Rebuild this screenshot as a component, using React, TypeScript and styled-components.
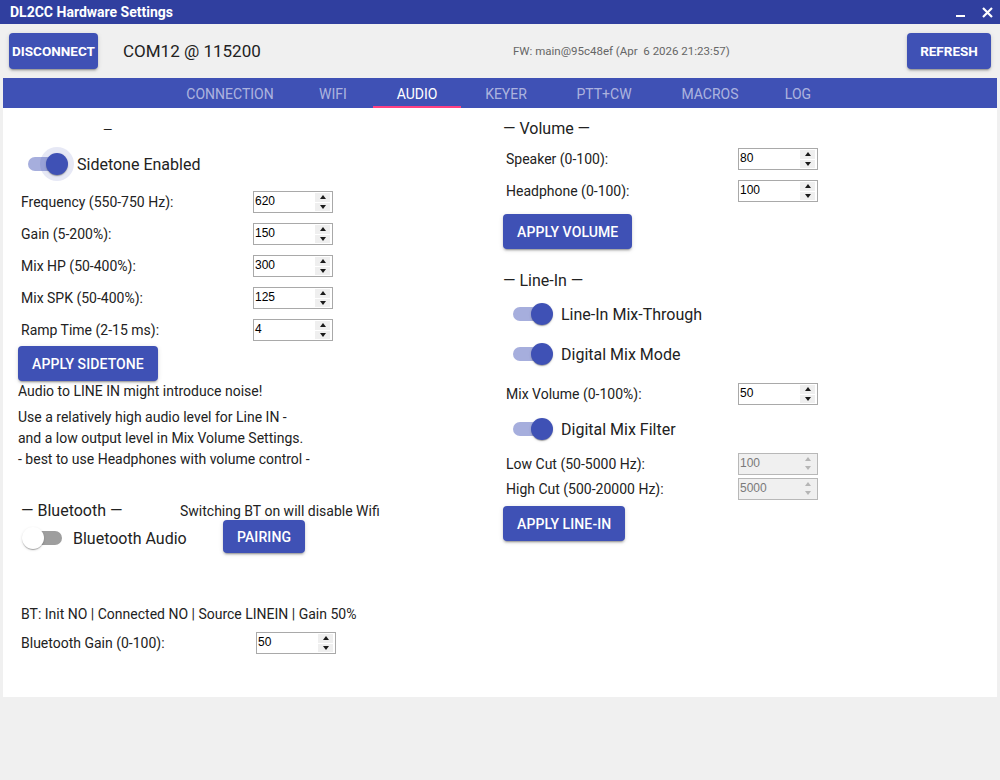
import styled, { createGlobalStyle } from "styled-components";

const GlobalStyle = createGlobalStyle`
  html, body {
    margin: 0;
    padding: 0;
    background: #f0f0f0;
  }
  body {
    font-family: Roboto, "Liberation Sans", sans-serif;
    color: rgba(0, 0, 0, 0.87);
  }
`;

const TABS = [
  { label: "Connection", width: 126 },
  { label: "WiFi", width: 80 },
  { label: "Audio", width: 88 },
  { label: "Keyer", width: 90 },
  { label: "PTT+CW", width: 106 },
  { label: "Macros", width: 106 },
  { label: "Log", width: 70 },
];

const SIDETONE = [
  { label: "Frequency (550-750 Hz):", value: "620" },
  { label: "Gain (5-200%):", value: "150" },
  { label: "Mix HP (50-400%):", value: "300" },
  { label: "Mix SPK (50-400%):", value: "125" },
  { label: "Ramp Time (2-15 ms):", value: "4" },
];

interface NumberProps {
  value: string;
  disabled?: boolean;
}

const NumberBox = ({ value, disabled }: NumberProps) => (
  <NumBox $disabled={disabled}>
    <NumValue $disabled={disabled}>{value}</NumValue>
    <Spin>
      <SpinBtn>
        <Arrow $up $disabled={disabled} />
      </SpinBtn>
      <SpinBtn>
        <Arrow $disabled={disabled} />
      </SpinBtn>
    </Spin>
  </NumBox>
);

interface ToggleProps {
  on: boolean;
  focus?: boolean;
  label: string;
  indent?: number;
  gap?: number;
  height?: number;
}

const Toggle = ({ on, focus, label, indent = 4, gap = 8, height = 40 }: ToggleProps) => (
  <SwitchRow $indent={indent} $height={height}>
    <SwitchBase>
      <Track $on={on} />
      <Thumb $on={on} $focus={focus} />
    </SwitchBase>
    <SwitchLabel $gap={gap}>{label}</SwitchLabel>
  </SwitchRow>
);

export default function App() {
  return (
    <Frame>
      <GlobalStyle />
      <TitleBar>
        <Title>DL2CC Hardware Settings</Title>
        <WinControls>
          <svg width="10" height="10" viewBox="0 0 10 10">
            <rect x="0" y="7" width="9" height="2" fill="#fff" />
          </svg>
          <svg width="11" height="11" viewBox="0 0 11 11">
            <path d="M1 1 L10 10 M10 1 L1 10" stroke="#fff" strokeWidth="2.2" />
          </svg>
        </WinControls>
      </TitleBar>

      <Header>
        <HeaderButton $width={89}>Disconnect</HeaderButton>
        <Port>COM12 @ 115200</Port>
        <Firmware>FW: main@95c48ef (Apr  6 2026 21:23:57)</Firmware>
        <HeaderButton $width={84} $push>
          Refresh
        </HeaderButton>
      </Header>

      <Body>
        <TabBar>
          {TABS.map((t) => (
            <Tab key={t.label} $width={t.width} $active={t.label === "Audio"}>
              {t.label}
            </Tab>
          ))}
        </TabBar>

        <Content>
          <Column $top={12}>
            <Dash>—</Dash>
            <Spacer $h={6} />
            <Toggle on focus label="Sidetone Enabled" gap={9} height={36} />
            <Spacer $h={4} />
            {SIDETONE.map((f) => (
              <Field key={f.label}>
                <Label $width={232}>{f.label}</Label>
                <NumberBox value={f.value} />
              </Field>
            ))}
            <Button>Apply Sidetone</Button>
            <Note>Audio to LINE IN might introduce noise!</Note>
            <NoteBlock>
              Use a relatively high audio level for Line IN -
              <br />
              and a low output level in Mix Volume Settings.
              <br />- best to use Headphones with volume control -
            </NoteBlock>

            <BtRow>
              <BtLeft>
                <Heading>— Bluetooth —</Heading>
                <Toggle on={false} label="Bluetooth Audio" indent={1} gap={5} height={34} />
              </BtLeft>
              <BtRight>
                <Note>Switching BT on will disable Wifi</Note>
                <PairButton>Pairing</PairButton>
              </BtRight>
            </BtRow>

            <Status>BT: Init NO | Connected NO | Source LINEIN | Gain 50%</Status>
            <Spacer $h={3} />
            <Field>
              <Label $width={235}>Bluetooth Gain (0-100):</Label>
              <NumberBox value="50" />
            </Field>
          </Column>

          <Column $top={11}>
            <Heading>— Volume —</Heading>
            <Spacer $h={4} />
            <Field>
              <Label $width={232}>Speaker (0-100):</Label>
              <NumberBox value="80" />
            </Field>
            <Field>
              <Label $width={232}>Headphone (0-100):</Label>
              <NumberBox value="100" />
            </Field>
            <Spacer $h={7} />
            <Button>Apply Volume</Button>
            <Spacer $h={22} />
            <Heading>— Line-In —</Heading>
            <Spacer $h={3} />
            <Toggle on label="Line-In Mix-Through" />
            <Toggle on label="Digital Mix Mode" />
            <Spacer $h={4} />
            <Field>
              <Label $width={232}>Mix Volume (0-100%):</Label>
              <NumberBox value="50" />
            </Field>
            <Toggle on label="Digital Mix Filter" height={38} />
            <Spacer $h={3} />
            <Field $height={25}>
              <Label $width={232}>Low Cut (50-5000 Hz):</Label>
              <NumberBox value="100" disabled />
            </Field>
            <Field $height={25}>
              <Label $width={232}>High Cut (500-20000 Hz):</Label>
              <NumberBox value="5000" disabled />
            </Field>
            <Spacer $h={5} />
            <Button>Apply Line-In</Button>
          </Column>
        </Content>
      </Body>
    </Frame>
  );
}

const Frame = styled.div`
  width: 1000px;
  height: 780px;
  background: #f0f0f0;
  overflow: hidden;
`;

const TitleBar = styled.div`
  height: 24px;
  background: #303f9f;
  display: flex;
  align-items: center;
  padding: 0 7px 0 10px;
`;

const Title = styled.span`
  color: #fff;
  font-weight: 700;
  font-size: 14px;
`;

const WinControls = styled.div`
  margin-left: auto;
  display: flex;
  align-items: center;
  gap: 16px;
  padding-top: 1px;
`;

const Header = styled.div`
  height: 54px;
  display: flex;
  align-items: center;
  padding: 0 9px;
`;

const Button = styled.button`
  height: 35px;
  padding: 0 14px;
  border: none;
  border-radius: 4px;
  background: #3f51b5;
  color: #fff;
  font-family: Roboto, "Liberation Sans", sans-serif;
  font-size: 14px;
  font-weight: 500;
  letter-spacing: 0.1px;
  text-transform: uppercase;
  white-space: nowrap;
  align-self: flex-start;
  box-shadow: 0 3px 1px -2px rgba(0, 0, 0, 0.2), 0 2px 2px 0 rgba(0, 0, 0, 0.14),
    0 1px 5px 0 rgba(0, 0, 0, 0.12);
`;

const HeaderButton = styled(Button)<{ $width: number; $push?: boolean }>`
  width: ${(p) => p.$width}px;
  height: 36px;
  padding: 0;
  align-self: center;
  font-size: 13.5px;
  font-weight: 700;
  letter-spacing: 0;
  margin-left: ${(p) => (p.$push ? "auto" : "0")};
`;

const PairButton = styled(Button)`
  height: 33px;
  margin: -1px 0 0 43px;
`;

const Port = styled.span`
  width: 390px;
  margin-left: 25px;
  font-size: 17px;
  color: #222;
`;

const Firmware = styled.span`
  font-size: 11.5px;
  color: #666;
  white-space: pre;
`;

const Body = styled.div`
  padding: 0 3px;
`;

const TabBar = styled.div`
  height: 30px;
  background: #3f51b5;
  display: flex;
  justify-content: center;
`;

const Tab = styled.div<{ $width: number; $active?: boolean }>`
  width: ${(p) => p.$width}px;
  box-sizing: border-box;
  display: flex;
  align-items: center;
  justify-content: center;
  padding-top: 3px;
  font-size: 14px;
  text-transform: uppercase;
  color: ${(p) => (p.$active ? "#fff" : "rgba(255, 255, 255, 0.58)")};
  border-bottom: 2px solid ${(p) => (p.$active ? "#ff4081" : "transparent")};
`;

const Content = styled.div`
  height: 589px;
  background: #fff;
  display: grid;
  grid-template-columns: 485px 1fr;
  padding-left: 15px;
  box-sizing: border-box;
`;

const Column = styled.div<{ $top: number }>`
  display: flex;
  flex-direction: column;
  padding-top: ${(p) => p.$top}px;
`;

const Spacer = styled.div<{ $h: number }>`
  height: ${(p) => p.$h}px;
  flex: none;
`;

const Dash = styled.div`
  padding-left: 85px;
  font-size: 12px;
  line-height: 20px;
  color: #222;
`;

const Heading = styled.div`
  font-size: 16px;
  line-height: 20px;
  color: #222;
`;

const SwitchRow = styled.div<{ $indent: number; $height: number }>`
  display: flex;
  align-items: center;
  height: ${(p) => p.$height}px;
  padding-left: ${(p) => p.$indent}px;
  white-space: nowrap;
`;

const SwitchBase = styled.span`
  position: relative;
  display: inline-block;
  width: 46px;
  height: 22px;
  flex: none;
`;

const Track = styled.span<{ $on: boolean }>`
  position: absolute;
  left: 6px;
  top: 4px;
  width: 34px;
  height: 14px;
  border-radius: 7px;
  background: ${(p) => (p.$on ? "#a6aedd" : "#9e9e9e")};
`;

const Thumb = styled.span<{ $on: boolean; $focus?: boolean }>`
  position: absolute;
  top: 0;
  left: ${(p) => (p.$on ? 24 : 0)}px;
  width: 22px;
  height: 22px;
  border-radius: 50%;
  background: ${(p) => (p.$on ? "#3f51b5" : "#fff")};
  box-shadow: 0 2px 1px -1px rgba(0, 0, 0, 0.2), 0 1px 1px 0 rgba(0, 0, 0, 0.14),
    0 1px 3px 0 rgba(0, 0, 0, 0.12)
    ${(p) => (p.$focus ? ", 0 0 0 6px rgba(63, 81, 181, 0.13)" : "")};
`;

const SwitchLabel = styled.span<{ $gap: number }>`
  margin-left: ${(p) => p.$gap}px;
  font-size: 16px;
  color: #222;
`;

const Field = styled.div<{ $height?: number }>`
  display: flex;
  align-items: center;
  height: ${(p) => p.$height ?? 32}px;
  padding-left: 3px;
  font-size: 14px;
  color: #222;
`;

const Label = styled.span<{ $width: number }>`
  width: ${(p) => p.$width}px;
  flex: none;
`;

const NumBox = styled.div<{ $disabled?: boolean }>`
  width: 80px;
  height: 22px;
  box-sizing: border-box;
  display: flex;
  border: 1px solid ${(p) => (p.$disabled ? "#b8b8b8" : "#a9a9a9")};
  background: ${(p) => (p.$disabled ? "#f0f0f0" : "#fff")};
`;

const NumValue = styled.span<{ $disabled?: boolean }>`
  flex: 1;
  padding-left: 1px;
  font-family: "Liberation Sans", Arial, sans-serif;
  font-size: 12px;
  line-height: 18px;
  color: ${(p) => (p.$disabled ? "#7a7a7a" : "#000")};
`;

const Spin = styled.div`
  width: 15px;
  display: flex;
  flex-direction: column;
  gap: 1px;
  margin: 1px 2px 1px 0;
`;

const SpinBtn = styled.div`
  flex: 1;
  background: #efefef;
  display: flex;
  align-items: center;
  justify-content: center;
`;

const Arrow = styled.span<{ $up?: boolean; $disabled?: boolean }>`
  width: 0;
  height: 0;
  border-left: 3.5px solid transparent;
  border-right: 3.5px solid transparent;
  ${(p) => (p.$up ? "border-bottom" : "border-top")}: 4px solid
    ${(p) => (p.$disabled ? "#b5b5b5" : "#1a1a1a")};
`;

const Note = styled.div`
  font-size: 14px;
  line-height: 20px;
  color: #222;
`;

const NoteBlock = styled.div`
  margin-top: 6px;
  font-size: 14px;
  line-height: 21px;
  color: #222;
`;

const BtRow = styled.div`
  display: flex;
  margin-top: 31px;
  padding-left: 3px;
`;

const BtLeft = styled.div`
  width: 159px;
  flex: none;
`;

const BtRight = styled.div`
  display: flex;
  flex-direction: column;
`;

const Status = styled.div`
  margin-top: 49px;
  padding-left: 3px;
  font-size: 14px;
  line-height: 20px;
  color: #222;
`;
